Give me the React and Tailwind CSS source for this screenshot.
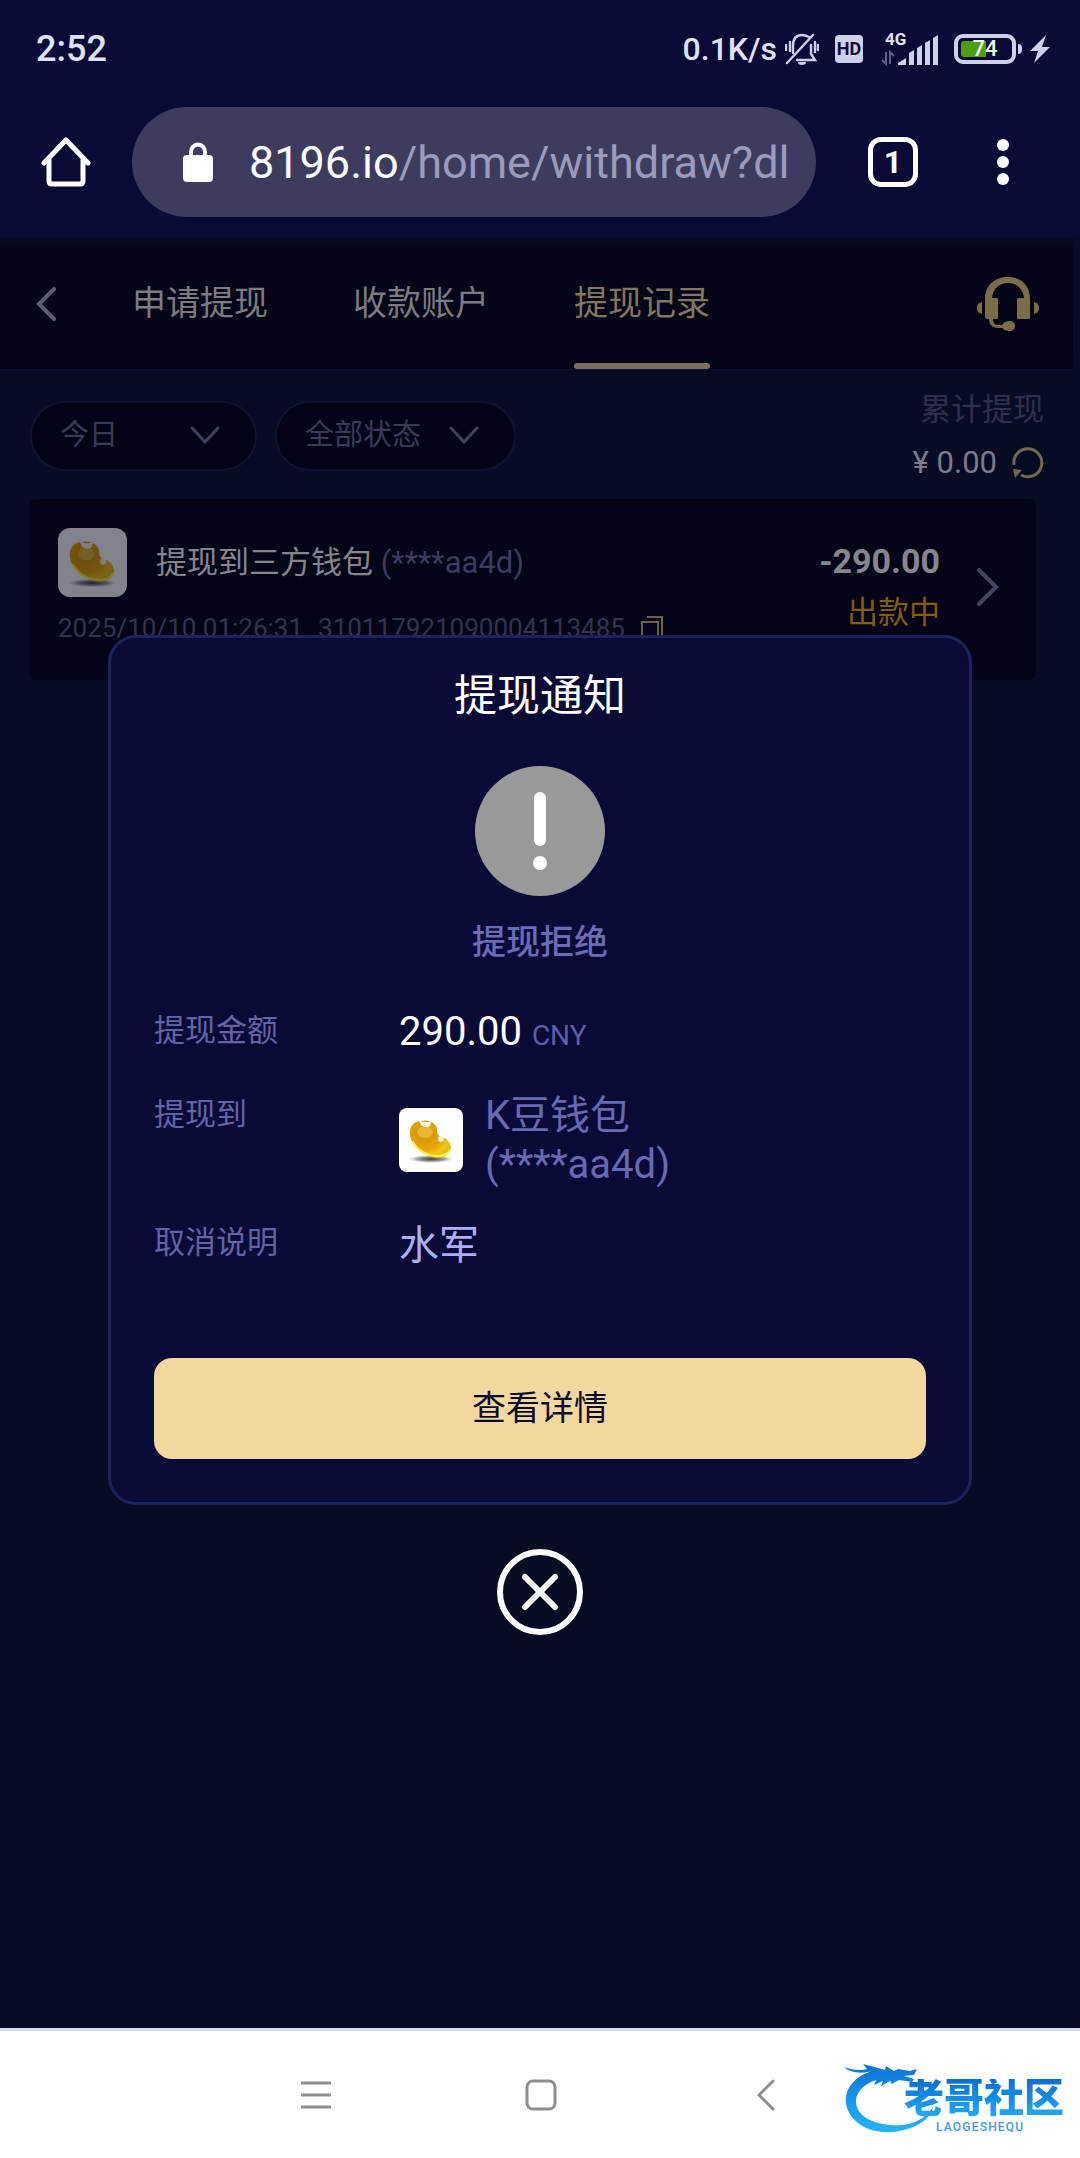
"use client";

const TABS = ["申请提现", "收款账户", "提现记录"];

const SIGNAL_BARS = [
  "M0 29v-2l8-5v7z",
  "M11 29V17l5-3v15z",
  "M19 29V12l5-3v20z",
  "M27 29V7l5-3v25z",
  "M35 29V2l5-3v30z",
];

function BeanIcon({ className }) {
  return (
    <svg viewBox="0 0 64 64" className={className} aria-hidden="true">
      <defs>
        <radialGradient id="bean" cx="36%" cy="34%" r="72%">
          <stop offset="0" stopColor="#e0a21c" />
          <stop offset="0.25" stopColor="#d99a08" />
          <stop offset="0.6" stopColor="#e6a508" />
          <stop offset="0.85" stopColor="#f3c916" />
          <stop offset="1" stopColor="#e3bb0a" />
        </radialGradient>
        <radialGradient id="bean-shadow">
          <stop offset="0" stopColor="#3a3a3a" />
          <stop offset="0.6" stopColor="#8a8a8a" stopOpacity="0.8" />
          <stop offset="1" stopColor="#cccccc" stopOpacity="0" />
        </radialGradient>
      </defs>
      <ellipse cx="32" cy="51" rx="23" ry="4" fill="url(#bean-shadow)" />
      <path
        d="M22 13C14 13 10 20 11 27C12 37 22 46 33 49C43 52 51 47 52 40C52 34 47 30 43 29C39 28 38 25 38 21C37 15 30 11 22 13Z"
        fill="url(#bean)"
      />
      <path d="M14 34C19 43 29 48 39 48C45 48 49 46 51 42" fill="none" stroke="#fff04a" strokeWidth="2" strokeLinecap="round" />
      <ellipse cx="26" cy="24" rx="8" ry="6" fill="#f0c84a" opacity="0.6" />
      <path d="M20 12C24 15 30 15 33 12L31 18C28 20 24 19 22 17Z" fill="#fffbe8" />
      <circle cx="42" cy="31" r="3" fill="#fff6d0" />
    </svg>
  );
}

function StatusBar() {
  return (
    <div className="flex h-24 items-center justify-between pl-9 pr-[30px] pt-0.5 font-medium text-[#dfe1f8]">
      <span className="text-[36px] leading-none">2:52</span>
      <div className="flex items-center">
        <span className="mr-2 text-[32px] leading-none">0.1K/s</span>
        <svg viewBox="0 0 34 32" className="mr-4 h-8 w-[34px]" fill="none" stroke="#cfd1ea" strokeWidth="2.4" strokeLinecap="round">
          <path d="M8 20V13C8 6 11 2 17 2c3 0 5 1 7 2M12 27h18l-4-6v-9" />
          <path d="M2 30L28 2M1 12v5M5 9v9M30 9v10M33 12v5" />
          <path d="M13 29a4 3 0 0 0 8 0z" fill="#cfd1ea" stroke="none" />
        </svg>
        <span className="mr-[18px] flex h-[28px] w-[28px] items-center justify-center rounded bg-[#cfd1ea] text-[18px] font-bold leading-none text-[#090a36]">
          HD
        </span>
        <svg viewBox="0 -6 57 45" className="mr-4 h-[45px] w-[57px]" aria-hidden="true">
          <text x="4" y="12" fontSize="17" fontWeight="700" fill="#dfe1f8" fontFamily="Roboto, sans-serif">
            4G
          </text>
          <path d="M5 19v12l-4-4M9 31V19l4 4" fill="none" stroke="#5d5f86" strokeWidth="2" />
          <g transform="translate(17 3)" fill="#cfd1ea">
            {SIGNAL_BARS.map((d) => (
              <path key={d} d={d} />
            ))}
          </g>
        </svg>
        <div className="flex h-[30px] w-[62px] rounded-[9px] border-4 border-[#cfd1ea] p-[3px]">
          <div className="flex w-full items-center justify-center rounded-[3px] bg-[linear-gradient(90deg,#4a9e12_52%,transparent_52%)] text-[22px] leading-none text-[#eef6ea]">
            74
          </div>
        </div>
        <span className="ml-0.5 h-2.5 w-1 rounded-r bg-[#cfd1ea]" />
        <svg viewBox="0 0 20 28" className="ml-2 h-7 w-5" fill="#cfd1ea">
          <path d="M16 0L0 16h8L4 28L20 12h-8z" />
        </svg>
      </div>
    </div>
  );
}

function BrowserBar() {
  return (
    <div className="flex items-center pb-[21px] pl-[41px] pr-[71px] pt-[11px]">
      <button type="button" aria-label="主页" className="mr-[41px]">
        <svg viewBox="0 0 50 50" className="h-[50px] w-[50px]" fill="none" stroke="#fff" strokeWidth="5" strokeLinejoin="round" strokeLinecap="round">
          <path d="M3 26L25 3l22 23M8 23v21q0 3 3 3h28q3 0 3-3V23" />
        </svg>
      </button>
      <button type="button" aria-label="地址栏" className="flex h-[110px] min-w-0 flex-1 items-center rounded-full bg-[#3d3c5f] pl-[51px] pr-[27px]">
        <svg viewBox="0 0 30 40" className="mr-9 h-10 w-[30px] shrink-0">
          <rect y="13" width="30" height="27" rx="4" fill="#fff" />
          <path d="M8 15V10a7 7.500 0 0 1 14 0v5" fill="none" stroke="#fff" strokeWidth="4" />
        </svg>
        <span className="overflow-hidden whitespace-nowrap pt-0.5 text-[45px] leading-[60px] text-[#9c9bbd]">
          <span className="text-white">8196.io</span>/home/withdraw?dl
        </span>
      </button>
      <button
        type="button"
        className="ml-[52px] flex h-[50px] w-[50px] items-center justify-center rounded-[13px] border-[5px] border-white text-[32px] font-bold leading-none text-white"
      >
        1
      </button>
      <button type="button" aria-label="更多" className="ml-[79px] flex flex-col gap-[5px]">
        <span className="h-3 w-3 rounded-full bg-white" />
        <span className="h-3 w-3 rounded-full bg-white" />
        <span className="h-3 w-3 rounded-full bg-white" />
      </button>
    </div>
  );
}

function Header() {
  return (
    <header className="flex h-[132px] items-stretch border-b border-[#101233] bg-linear-to-b from-[#070a1e] via-[#050318] via-15% to-[#030417] pl-9 pr-[34px]">
      <button type="button" aria-label="返回" className="mr-[76px]">
        <svg viewBox="0 0 20 34" className="h-[34px] w-5" fill="none" stroke="#5c5b78" strokeWidth="4" strokeLinecap="round">
          <path d="M18 2L3 17l15 15" />
        </svg>
      </button>
      <nav className="flex gap-[85px]">
        {TABS.map((tab) => {
          const active = tab === "提现记录";
          return (
            <a
              key={tab}
              href="#"
              className={
                active
                  ? "relative flex items-center text-[34px] text-[#81775f]"
                  : "flex items-center text-[34px] text-[#7d7b80]"
              }
            >
              {tab}
              {active && <span className="absolute bottom-0 left-0 h-1.5 w-full rounded-full bg-[#7a6f5c]" />}
            </a>
          );
        })}
      </nav>
      <button type="button" aria-label="客服" className="ml-auto">
        <svg viewBox="0 0 62 54" className="h-[54px] w-[62px]" fill="#7b6d4b">
          <path d="M8 22C8 8 18 0 31 0s22 8 22 22v19q0 1-1 1H41q-1 0-1-1V22q0-1 1-1h6C46 11 39 6 31 6s-15 5-16 15h5q1 0 1 1v19q0 1-1 1h-4c0 4 2 6 5 6h4c2-3 4-4 7-4 4 0 6 2 6 5s-2 5-6 5c-3 0-5-1-7-3h-4c-5 0-9-3-9-9-2 0-4 0-4-2z" />
          <path d="M5 25v12C1 36 0 34 0 31s1-5 5-6zM57 25v12c4-1 5-3 5-6s-1-5-5-6z" />
        </svg>
      </button>
    </header>
  );
}

function FilterSelect({ label, value, className }) {
  return (
    <div className={className}>
      <select
        aria-label={label}
        className="h-[70px] w-full appearance-none rounded-full border-2 border-[#11122f] bg-[#030318] pl-7 text-[29px] text-[#3b3a56]"
      >
        <option>{value}</option>
      </select>
      <svg
        viewBox="0 0 30 18"
        className="pointer-events-none absolute right-[37px] top-[25px] h-[18px] w-[30px]"
        fill="none"
        stroke="#413f5c"
        strokeWidth="3"
        strokeLinecap="round"
      >
        <path d="M2 2l13 14L28 2" />
      </svg>
    </div>
  );
}

function Toolbar() {
  return (
    <div className="flex items-center gap-[18px] pl-[30px] pr-[29px] pt-4">
      <FilterSelect label="日期" value="今日" className="relative w-[227px]" />
      <FilterSelect label="状态" value="全部状态" className="relative w-[241px]" />
      <div className="ml-auto flex flex-col items-end gap-1.5 text-[31px] leading-[47px]">
        <span className="text-[#302f4c]">累计提现</span>
        <span className="flex items-center text-[#7a7b8c]">
          ¥ 0.00
          <button type="button" aria-label="刷新" className="ml-[15px]">
            <svg viewBox="0 0 32 32" className="h-8 w-8" fill="none" stroke="#716a4e" strokeWidth="3">
              <path d="M2 18A14 14 0 1 1 9 28" />
              <path d="M1 22l9 1-7 8z" fill="#716a4e" stroke="none" />
            </svg>
          </button>
        </span>
      </div>
    </div>
  );
}

function RecordCard() {
  return (
    <article className="ml-[29px] mr-[37px] mt-[13px] flex items-center rounded-lg bg-[#030417] pb-[34px] pl-[29px] pr-[37px] pt-[29px]">
      <div className="min-w-0 flex-1">
        <div className="flex items-center">
          <BeanIcon className="mr-[29px] h-[69px] w-[69px] rounded-xl bg-white opacity-50" />
          <span className="pt-0.5 text-[31px] text-[#85858e]">
            提现到三方钱包 <span className="text-[#3d3b5e]">(****aa4d)</span>
          </span>
        </div>
        <div className="mt-[13px] flex items-center text-[26px] leading-9 text-[#34334e]">
          <time className="mr-[15px]">2025/10/10 01:26:31</time>
          <span>310117921090004113485</span>
          <button type="button" aria-label="复制" className="ml-4">
            <svg viewBox="0 0 22 24" className="h-6 w-[22px]" fill="none" stroke="#6b623f" strokeWidth="2">
              <path d="M1 6h16v17H1zM6 1h15v19" />
            </svg>
          </button>
        </div>
      </div>
      <div className="flex flex-col items-end leading-[52px]">
        <span className="text-[34px] font-bold text-[#85868f]">-290.00</span>
        <span className="text-[31px] text-[#855a13]">出款中</span>
      </div>
      <svg viewBox="0 0 22 38" className="ml-[37px] h-[38px] w-[22px]" fill="none" stroke="#45435f" strokeWidth="4" strokeLinecap="round">
        <path d="M2 2l17 17L2 36" />
      </svg>
    </article>
  );
}

function WithdrawDialog() {
  return (
    <div className="absolute inset-0 flex flex-col items-center pt-[397px]">
      <section
        role="dialog"
        aria-labelledby="dialog-title"
        className="flex w-4/5 flex-col items-center rounded-[28px] border-[3px] border-[#1d2360] bg-[#090a36] px-[43px] pb-[43px] pt-7"
      >
        <h2 id="dialog-title" className="text-[43px] leading-[60px] text-white">
          提现通知
        </h2>
        <svg viewBox="0 0 130 130" className="mt-10 h-[130px] w-[130px]" aria-hidden="true">
          <circle cx="65" cy="65" r="65" fill="#999" />
          <rect x="59" y="26" width="12" height="54" rx="6" fill="#fff" />
          <circle cx="65" cy="97" r="7" fill="#fff" />
        </svg>
        <p className="mt-6 text-[34px] font-medium leading-[44px] text-[#696db5]">提现拒绝</p>

        <dl className="mt-[43px] grid w-full grid-cols-[245px_1fr] gap-y-[30px] text-[40px]">
          <dt className="text-[31px] leading-[48px] text-[#6264a6]">提现金额</dt>
          <dd className="leading-[50px] text-white">
            290.00 <span className="text-[28px] text-[#5d5fa8]">CNY</span>
          </dd>
          <dt className="text-[31px] leading-[48px] text-[#6264a6]">提现到</dt>
          <dd className="flex items-center gap-[22px] leading-[49px] text-[#6769b4]">
            <BeanIcon className="h-16 w-16 rounded-lg bg-white" />
            <span>
              K豆钱包
              <br />
              (****aa4d)
            </span>
          </dd>
          <dt className="text-[31px] leading-[48px] text-[#6264a6]">取消说明</dt>
          <dd className="leading-[54px] text-[#a9affa]">水军</dd>
        </dl>

        <button type="button" className="mt-[85px] h-[101px] w-full rounded-[18px] bg-[#f2d89e] text-[34px] text-[#0a0a2c]">
          查看详情
        </button>
      </section>
      <button type="button" aria-label="关闭" className="mt-[43px]">
        <svg viewBox="0 0 88 88" className="h-[88px] w-[88px]" fill="none" stroke="#fff" strokeWidth="6" strokeLinecap="round">
          <circle cx="44" cy="44" r="40" />
          <path d="M29 29l30 30M59 29L29 59" />
        </svg>
      </button>
    </div>
  );
}

function CommunityLogo() {
  return (
    <div className="absolute right-4 top-[30px] flex">
      <svg viewBox="0 0 90 72" className="-mr-[30px] h-[72px] w-[90px]" aria-hidden="true">
        <defs>
          <linearGradient id="dragon" x1="0" y1="0" x2="0" y2="1">
            <stop offset="0" stopColor="#0d72d6" />
            <stop offset="1" stopColor="#25b4fb" />
          </linearGradient>
        </defs>
        <path
          d="M28 10C9 16 0 29 2 43C6 63 27 73 50 71C72 68 87 58 89 46C80 60 64 66 46 64C26 62 12 54 12 40C12 31 20 23 32 19L30 24L39 20L37 25L46 20L48 23L55 19L68 21L70 18L60 15L70 14L73 8L66 10L54 8L50 10L42 5L41 9L34 7L19 3L23 8C16 10 8 9 0 6C6 12 18 13 28 10Z"
          fill="url(#dragon)"
        />
      </svg>
      <div className="relative flex flex-col pt-[18px]">
        <span className="bg-linear-to-b from-[#0b6fd3] to-[#27adf6] bg-clip-text text-[40px] font-black leading-[40px] text-transparent">
          老哥社区
        </span>
        <span className="pl-[32px] text-[12px] font-medium leading-[16px] tracking-widest text-[#3f9be0]">LAOGESHEQU</span>
      </div>
    </div>
  );
}

function SystemNav() {
  return (
    <footer className="relative flex h-[130px] items-center justify-center gap-[161px] border-t-[3px] border-[#d5dbe6] bg-white pl-0.5">
      <button type="button" aria-label="最近任务" className="flex w-16 justify-center">
        <svg viewBox="0 0 30 28" className="h-7 w-[30px]" stroke="#8e8e8e" strokeWidth="3" strokeLinecap="round">
          <path d="M1 2h28M1 14h28M1 26h28" />
        </svg>
      </button>
      <button type="button" aria-label="主屏幕" className="flex w-16 justify-center">
        <svg viewBox="0 0 32 32" className="h-8 w-8" fill="none" stroke="#8e8e8e" strokeWidth="3">
          <rect x="2" y="2" width="28" height="28" rx="6" />
        </svg>
      </button>
      <button type="button" aria-label="返回上一页" className="flex w-16 justify-center">
        <svg viewBox="0 0 18 32" className="h-8 w-[18px]" fill="none" stroke="#8e8e8e" strokeWidth="3" strokeLinecap="round">
          <path d="M16 2L2 16l14 14" />
        </svg>
      </button>
      <CommunityLogo />
    </footer>
  );
}

export default function App() {
  return (
    <div className="flex min-h-screen flex-col bg-[#090a36] font-[Roboto,'Noto_Sans_CJK_SC',sans-serif]">
      <StatusBar />
      <BrowserBar />
      <main className="relative flex-1 bg-[#080b24] pr-[7px]">
        <Header />
        <Toolbar />
        <RecordCard />
        <WithdrawDialog />
      </main>
      <SystemNav />
    </div>
  );
}
